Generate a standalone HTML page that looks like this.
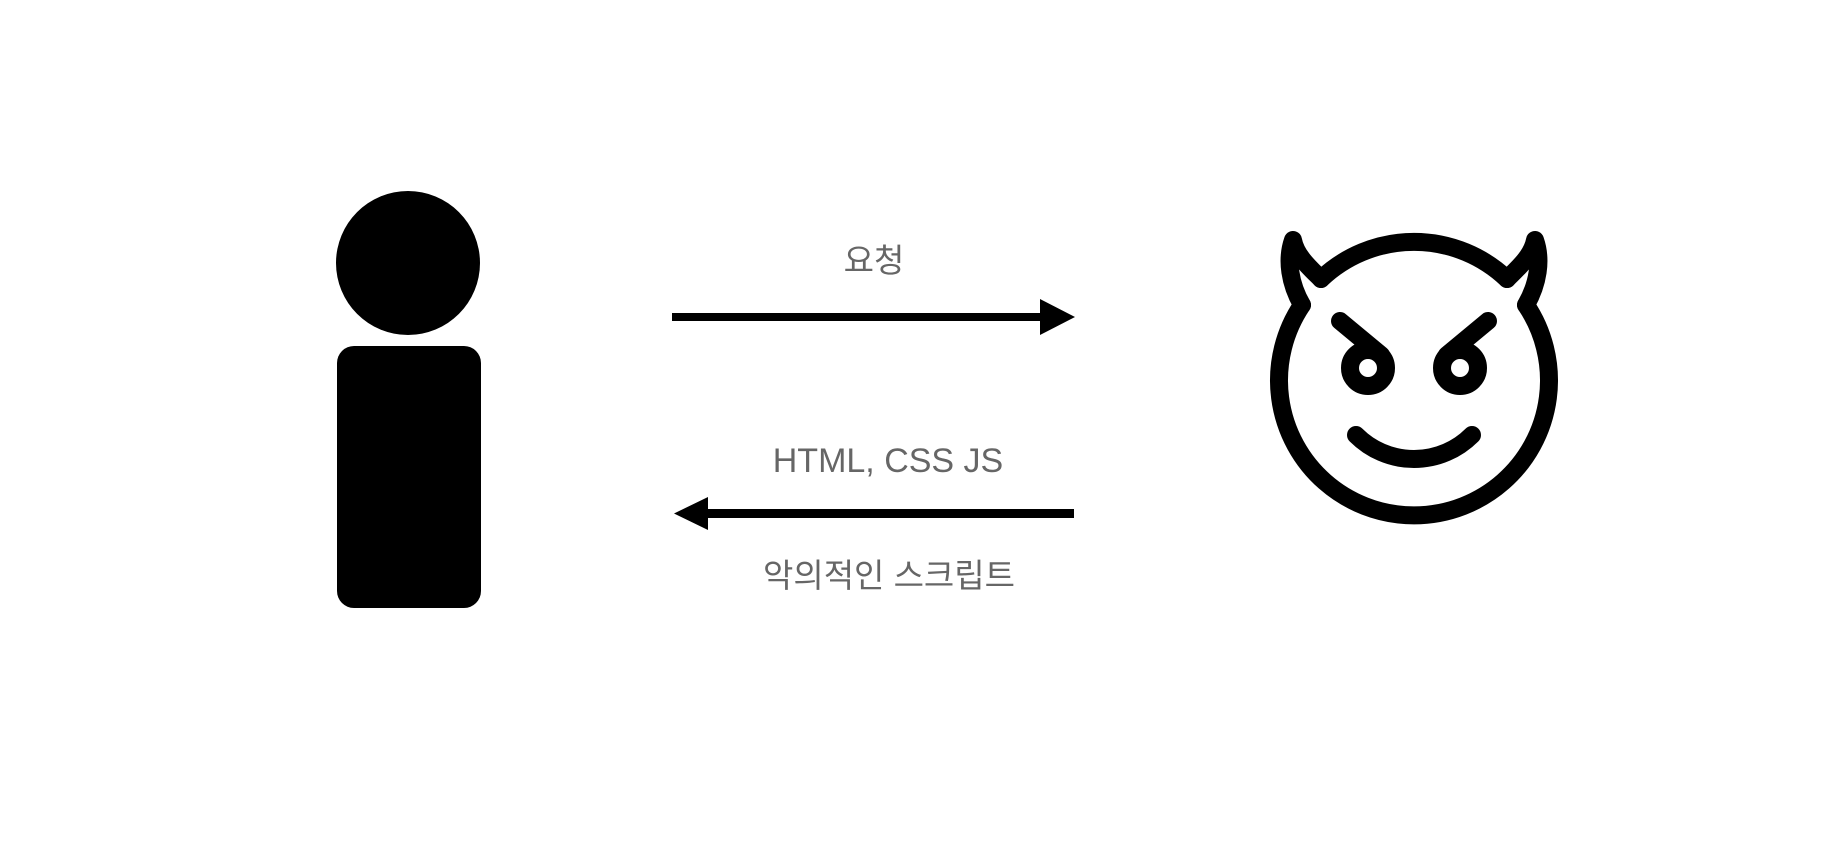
<!DOCTYPE html>
<html><head><meta charset="utf-8"><style>
html,body{margin:0;padding:0;background:#fff;width:1840px;height:846px;overflow:hidden}
svg{display:block}
text{font-family:"Liberation Sans","Noto Sans CJK KR",sans-serif;fill:#666;font-size:34px}
</style></head><body>
<svg width="1840" height="846" viewBox="0 0 1840 846">
<circle cx="408" cy="263" r="72" fill="#000"/>
<rect x="337" y="346" width="144" height="262" rx="17" fill="#000"/>
<text x="874" y="272" text-anchor="middle" style="font-size:33px">요청</text>
<rect x="672" y="313" width="370" height="8" fill="#000"/>
<polygon points="1040,299 1075,317 1040,335" fill="#000"/>
<text x="888" y="472" text-anchor="middle">HTML, CSS JS</text>
<rect x="706" y="509" width="368" height="9" fill="#000"/>
<polygon points="708,497 674,513.5 708,530" fill="#000"/>
<text x="889" y="587" text-anchor="middle" style="font-size:33px">악의적인 스크립트</text>
<g fill="none" stroke="#000" stroke-width="18" stroke-linecap="round" stroke-linejoin="round">
<path d="M1321 279 A135 135 0 0 1 1507 279"/>
<path d="M1302 305 A135 135 0 1 0 1526 305"/>
<path d="M1302 305 C1290 284 1286 260 1293 240 C1296 256 1310 268 1321 279"/>
<path d="M1526 305 C1538 284 1542 260 1535 240 C1532 256 1518 268 1507 279"/>
<circle cx="1368" cy="368" r="18"/>
<circle cx="1460" cy="368" r="18"/>
<path d="M1340 321 L1381 355"/>
<path d="M1488 321 L1447 355"/>
<path d="M1356 435 A82 82 0 0 0 1472 435"/>
</g>
</svg>
</body></html>
